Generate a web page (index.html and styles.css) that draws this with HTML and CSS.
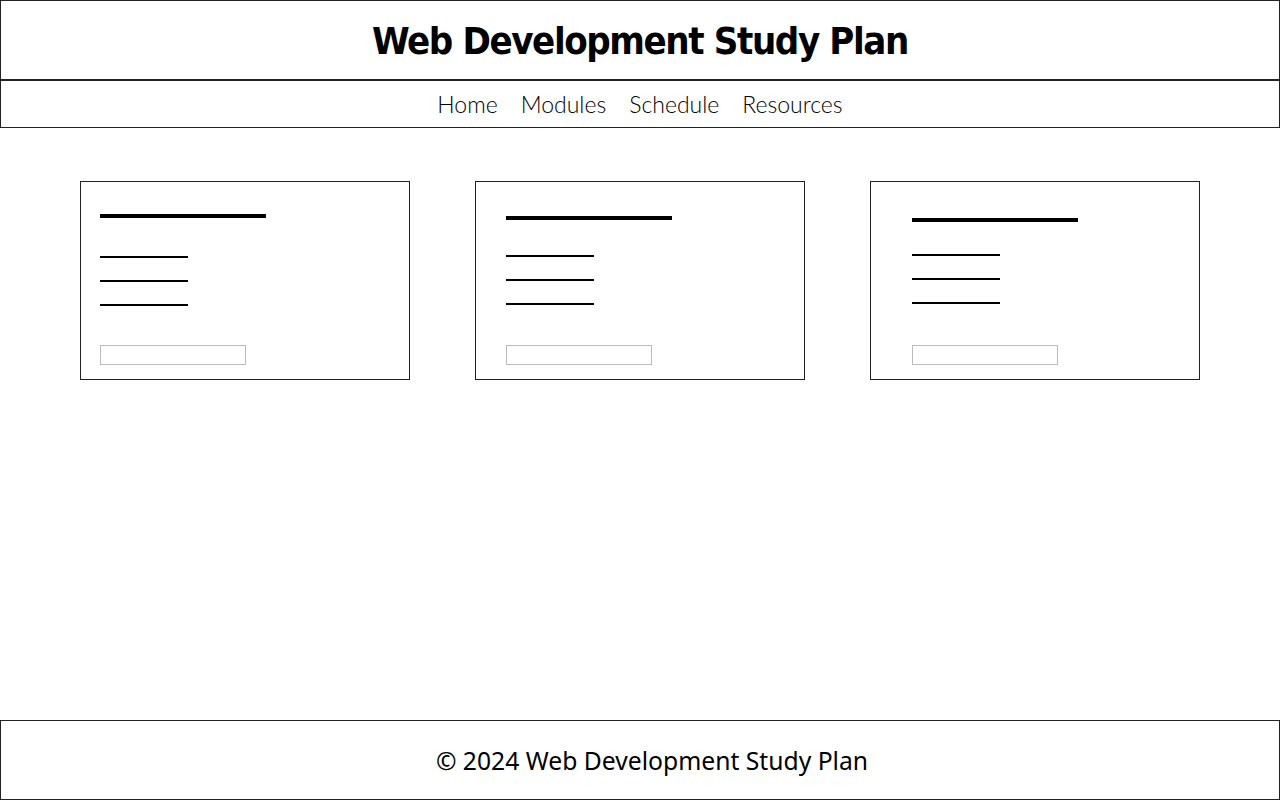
FILE: index.html
```html
<!DOCTYPE html>
<html lang="en">
<head>
    <meta charset="UTF-8">
    <meta name="viewport" content="width=device-width, initial-scale=1.0">
    <title>Web Development Study Plan</title>
    <link rel="stylesheet" href="styles.css">
</head>
<body>
    <header>
        <h1>Web Development Study Plan</h1>
    </header>
    <nav>
        <ul>
            <li><a href="#">Home</a></li>
            <li><a href="#">Modules</a></li>
            <li><a href="#">Schedule</a></li>
            <li><a href="#">Resources</a></li>
        </ul>
    </nav>

    <main class="container">
        <!-- placeholder module cards -->
        <div class="card">
            <div class="bar"></div>
            <div class="line"></div>
            <div class="line"></div>
            <div class="line"></div>
            <input type="text" class="field">
        </div>
        <div class="card">
            <div class="bar"></div>
            <div class="line"></div>
            <div class="line"></div>
            <div class="line"></div>
            <input type="text" class="field">
        </div>
        <div class="card">
            <div class="bar"></div>
            <div class="line"></div>
            <div class="line"></div>
            <div class="line"></div>
            <input type="text" class="field">
        </div>
    </main>

    <footer>
        <p>&copy; 2024 Web Development Study Plan</p>
    </footer>
</body>
</html>
```

FILE: styles.css
```css
* {
  margin: 0;
  padding: 0;
  box-sizing: border-box;
}

body {
  font-family: "Noto Sans", Arial, sans-serif;
  background-color: #fff;
  color: #000;
  min-height: 100vh;
  display: flex;
  flex-direction: column;
}

header {
  height: 80px;
  border: 1px solid #222;
  display: flex;
  justify-content: center;
  align-items: center;
}

header h1 {
  font-family: "DejaVu Sans Condensed", "Noto Sans", sans-serif;
  font-stretch: condensed;
  font-size: 38px;
  font-weight: bold;
  letter-spacing: -1.4px;
  padding-top: 2px;
}

nav {
  height: 48px;
  border: 1px solid #222;
  display: flex;
  justify-content: center;
  align-items: center;
}

nav ul {
  display: flex;
  gap: 23px;
  list-style: none;
}

nav ul li a {
  font-family: Lato, sans-serif;
  font-weight: 300;
  font-size: 23px;
  text-decoration: none;
  color: #000;
}

.container {
  display: flex;
  justify-content: space-between;
  padding: 0 80px;
  margin-top: 53px;
}

.card {
  width: 330px;
  height: 199px;
  border: 1px solid #222;
  display: flex;
  flex-direction: column;
  align-items: flex-start;
  padding: 32px 0 14px 19px;
}

.card:nth-child(2) {
  padding-top: 34px;
  padding-left: 30px;
}

.card:nth-child(3) {
  padding-top: 36px;
  padding-left: 41px;
}

.bar {
  width: 166px;
  height: 4px;
  background-color: #000;
  margin-bottom: 38px;
}

.card:nth-child(2) .bar {
  margin-bottom: 35px;
}

.card:nth-child(3) .bar {
  margin-bottom: 32px;
}

.line {
  width: 88px;
  height: 2px;
  background-color: #000;
  margin-bottom: 22px;
}

.field {
  margin-top: auto;
  width: 146px;
  height: 20px;
  border: 1px solid #bbb;
  background: #fff;
}

footer {
  margin-top: auto;
  height: 80px;
  border: 1px solid #222;
  display: flex;
  justify-content: center;
  align-items: center;
  padding-left: 24px;
}

footer p {
  font-size: 24.7px;
}
```
